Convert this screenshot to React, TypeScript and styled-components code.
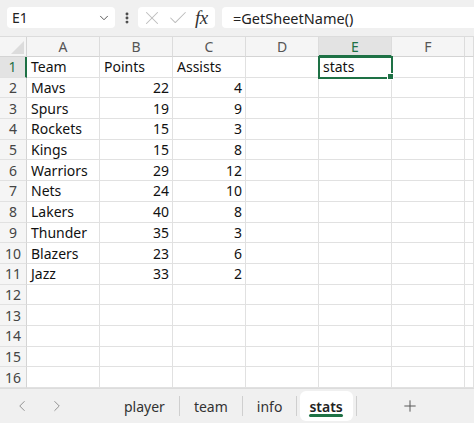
import styled, { createGlobalStyle } from "styled-components";
import { ChevronDown, EllipsisVertical, X, Check, ChevronLeft, ChevronRight, Plus } from "lucide-react";

const GlobalStyle = createGlobalStyle`
  body {
    margin: 0;
    font-family: "Noto Sans", "Open Sans", sans-serif;
    background: #fff;
  }
`;

const GREEN = "#1e7145";
const GRID = "#e1e1e1";

const Window = styled.div`
  width: 474px;
  height: 427px;
  overflow: hidden;
  display: flex;
  flex-direction: column;
  background: #fff;
`;

const Toolbar = styled.div`
  height: 37px;
  box-sizing: border-box;
  padding: 7px 0 8px 7px;
  background: #f0f0f0;
  display: flex;
  align-items: stretch;
  border-bottom: 1px solid #dcdcdc;
`;

const NameBox = styled.div`
  width: 108px;
  background: #fff;
  border-radius: 4px;
  display: flex;
  align-items: center;
  justify-content: space-between;
  padding: 0 4px 0 5px;
  box-sizing: border-box;
  font-size: 14px;
  color: #222;
`;

const Dots = styled.div`
  width: 23px;
  display: flex;
  align-items: center;
  justify-content: center;
  color: #444;
`;

const IconBox = styled.div`
  width: 77px;
  background: #fff;
  border-radius: 4px;
  display: flex;
  align-items: center;
  padding: 0 0 0 3px;
  box-sizing: border-box;
  gap: 4px;
  color: #bcbcbc;
`;

const Fx = styled.span`
  font-family: "Liberation Serif", serif;
  font-style: italic;
  font-size: 19px;
  line-height: 1;
  color: #333;
  margin-left: 2px;
  letter-spacing: -0.5px;
`;

const Formula = styled.div`
  flex: 1;
  margin-left: 7px;
  background: #fff;
  border-radius: 4px 0 0 4px;
  display: flex;
  align-items: center;
  padding-left: 11px;
  font-size: 14.5px;
  color: #222;
`;

const Sheet = styled.div`
  height: 351px;
  display: grid;
  grid-template-columns: 27px repeat(6, 73px) 1fr;
  grid-template-rows: 20px repeat(16, 1fr);
`;

const Corner = styled.div`
  background: #f5f5f5;
  border-right: 1px solid #d4d4d4;
  border-bottom: 1px solid #d4d4d4;
  position: relative;
  &::after {
    content: "";
    position: absolute;
    right: 2px;
    bottom: 2px;
    border-left: 13px solid transparent;
    border-bottom: 13px solid #dcdcdc;
  }
`;

const ColHead = styled.div<{ $active?: boolean }>`
  background: ${(p) => (p.$active ? "#e3e3e3" : "#f5f5f5")};
  color: ${(p) => (p.$active ? GREEN : "#555")};
  border-right: 1px solid #dcdcdc;
  border-bottom: ${(p) => (p.$active ? `2px solid ${GREEN}` : "1px solid #d4d4d4")};
  display: flex;
  align-items: center;
  justify-content: center;
  font-size: 14px;
`;

const RowHead = styled.div<{ $active?: boolean }>`
  background: ${(p) => (p.$active ? "#e3e3e3" : "#f5f5f5")};
  color: ${(p) => (p.$active ? GREEN : "#444")};
  border-right: ${(p) => (p.$active ? `2px solid ${GREEN}` : "1px solid #d4d4d4")};
  border-bottom: 1px solid ${GRID};
  display: flex;
  align-items: center;
  justify-content: center;
  font-size: 14px;
`;

const Cell = styled.div<{ $num?: boolean; $active?: boolean }>`
  border-right: 1px solid ${GRID};
  border-bottom: 1px solid ${GRID};
  display: flex;
  align-items: center;
  justify-content: ${(p) => (p.$num ? "flex-end" : "flex-start")};
  padding: 0 3px 0 4px;
  font-size: 14px;
  color: #111;
  white-space: nowrap;
  overflow: visible;
  position: relative;
  ${(p) =>
    p.$active &&
    `
    outline: 2px solid ${GREEN};
    outline-offset: -1px;
    z-index: 1;
    &::after {
      content: "";
      position: absolute;
      right: -3px;
      bottom: -3px;
      width: 5px;
      height: 5px;
      background: ${GREEN};
      border: 1px solid #fff;
    }
  `}
`;

const TabBar = styled.div`
  height: 35px;
  background: #f0f0f0;
  border-top: 1px solid #dcdcdc;
  box-sizing: border-box;
  display: flex;
  align-items: center;
`;

const Nav = styled.div`
  width: 110px;
  display: flex;
  align-items: center;
  padding-left: 13px;
  box-sizing: border-box;
  gap: 17px;
  color: #8f8f8f;
`;

const Tab = styled.div<{ $active?: boolean }>`
  height: 30px;
  display: flex;
  align-items: center;
  font-size: 14px;
  color: ${(p) => (p.$active ? "#222" : "#333")};
  font-weight: ${(p) => (p.$active ? 600 : 400)};
  padding: ${(p) => (p.$active ? "0 10px 0 9px" : "0 14px")};
  margin: ${(p) => (p.$active ? "0 3px" : "0")};
  background: ${(p) => (p.$active ? "#fff" : "transparent")};
  border-radius: 6px;
  position: relative;
`;

const Underline = styled.span`
  position: absolute;
  left: 9px;
  right: 10px;
  bottom: 4px;
  height: 3px;
  border-radius: 2px;
  background: ${GREEN};
`;

const Sep = styled.div`
  width: 1px;
  height: 20px;
  background: #cfcfcf;
`;

const AddTab = styled.div`
  margin-left: 44px;
  display: flex;
  align-items: center;
  color: #555;
`;

const rows: [string, string, string][] = [
  ["Team", "Points", "Assists"],
  ["Mavs", "22", "4"],
  ["Spurs", "19", "9"],
  ["Rockets", "15", "3"],
  ["Kings", "15", "8"],
  ["Warriors", "29", "12"],
  ["Nets", "24", "10"],
  ["Lakers", "40", "8"],
  ["Thunder", "35", "3"],
  ["Blazers", "23", "6"],
  ["Jazz", "33", "2"],
];

const cols = ["A", "B", "C", "D", "E", "F", ""];

export default function App() {
  const lines = Array.from({ length: 16 }, (_, i) => i + 1);
  return (
    <Window>
      <GlobalStyle />
      <Toolbar>
        <NameBox>
          <span>E1</span>
          <ChevronDown size={14} strokeWidth={1.5} color="#444" />
        </NameBox>
        <Dots>
          <EllipsisVertical size={14} strokeWidth={3} />
        </Dots>
        <IconBox>
          <X size={22} strokeWidth={1.1} />
          <Check size={22} strokeWidth={1.1} />
          <Fx>fx</Fx>
        </IconBox>
        <Formula>=GetSheetName()</Formula>
      </Toolbar>
      <Sheet>
        <Corner />
        {cols.map((c, i) => (
          <ColHead key={i} $active={c === "E"}>
            {c}
          </ColHead>
        ))}
        {lines.map((n) => {
          const data = rows[n - 1];
          return [
            <RowHead key={`h${n}`} $active={n === 1}>
              {n}
            </RowHead>,
            ...cols.map((_, ci) => {
              let text = "";
              let num = false;
              if (data && ci < 3) {
                text = data[ci];
                num = n > 1 && ci > 0;
              }
              if (n === 1 && ci === 4) text = "stats";
              return (
                <Cell key={`${n}-${ci}`} $num={num} $active={n === 1 && ci === 4}>
                  {text}
                </Cell>
              );
            }),
          ];
        })}
      </Sheet>
      <TabBar>
        <Nav>
          <ChevronLeft size={18} strokeWidth={1.3} />
          <ChevronRight size={18} strokeWidth={1.3} />
        </Nav>
        <Tab>player</Tab>
        <Sep />
        <Tab>team</Tab>
        <Sep />
        <Tab>info</Tab>
        <Sep />
        <Tab $active>
          stats
          <Underline />
        </Tab>
        <Sep />
        <AddTab>
          <Plus size={18} strokeWidth={1.3} />
        </AddTab>
      </TabBar>
    </Window>
  );
}
